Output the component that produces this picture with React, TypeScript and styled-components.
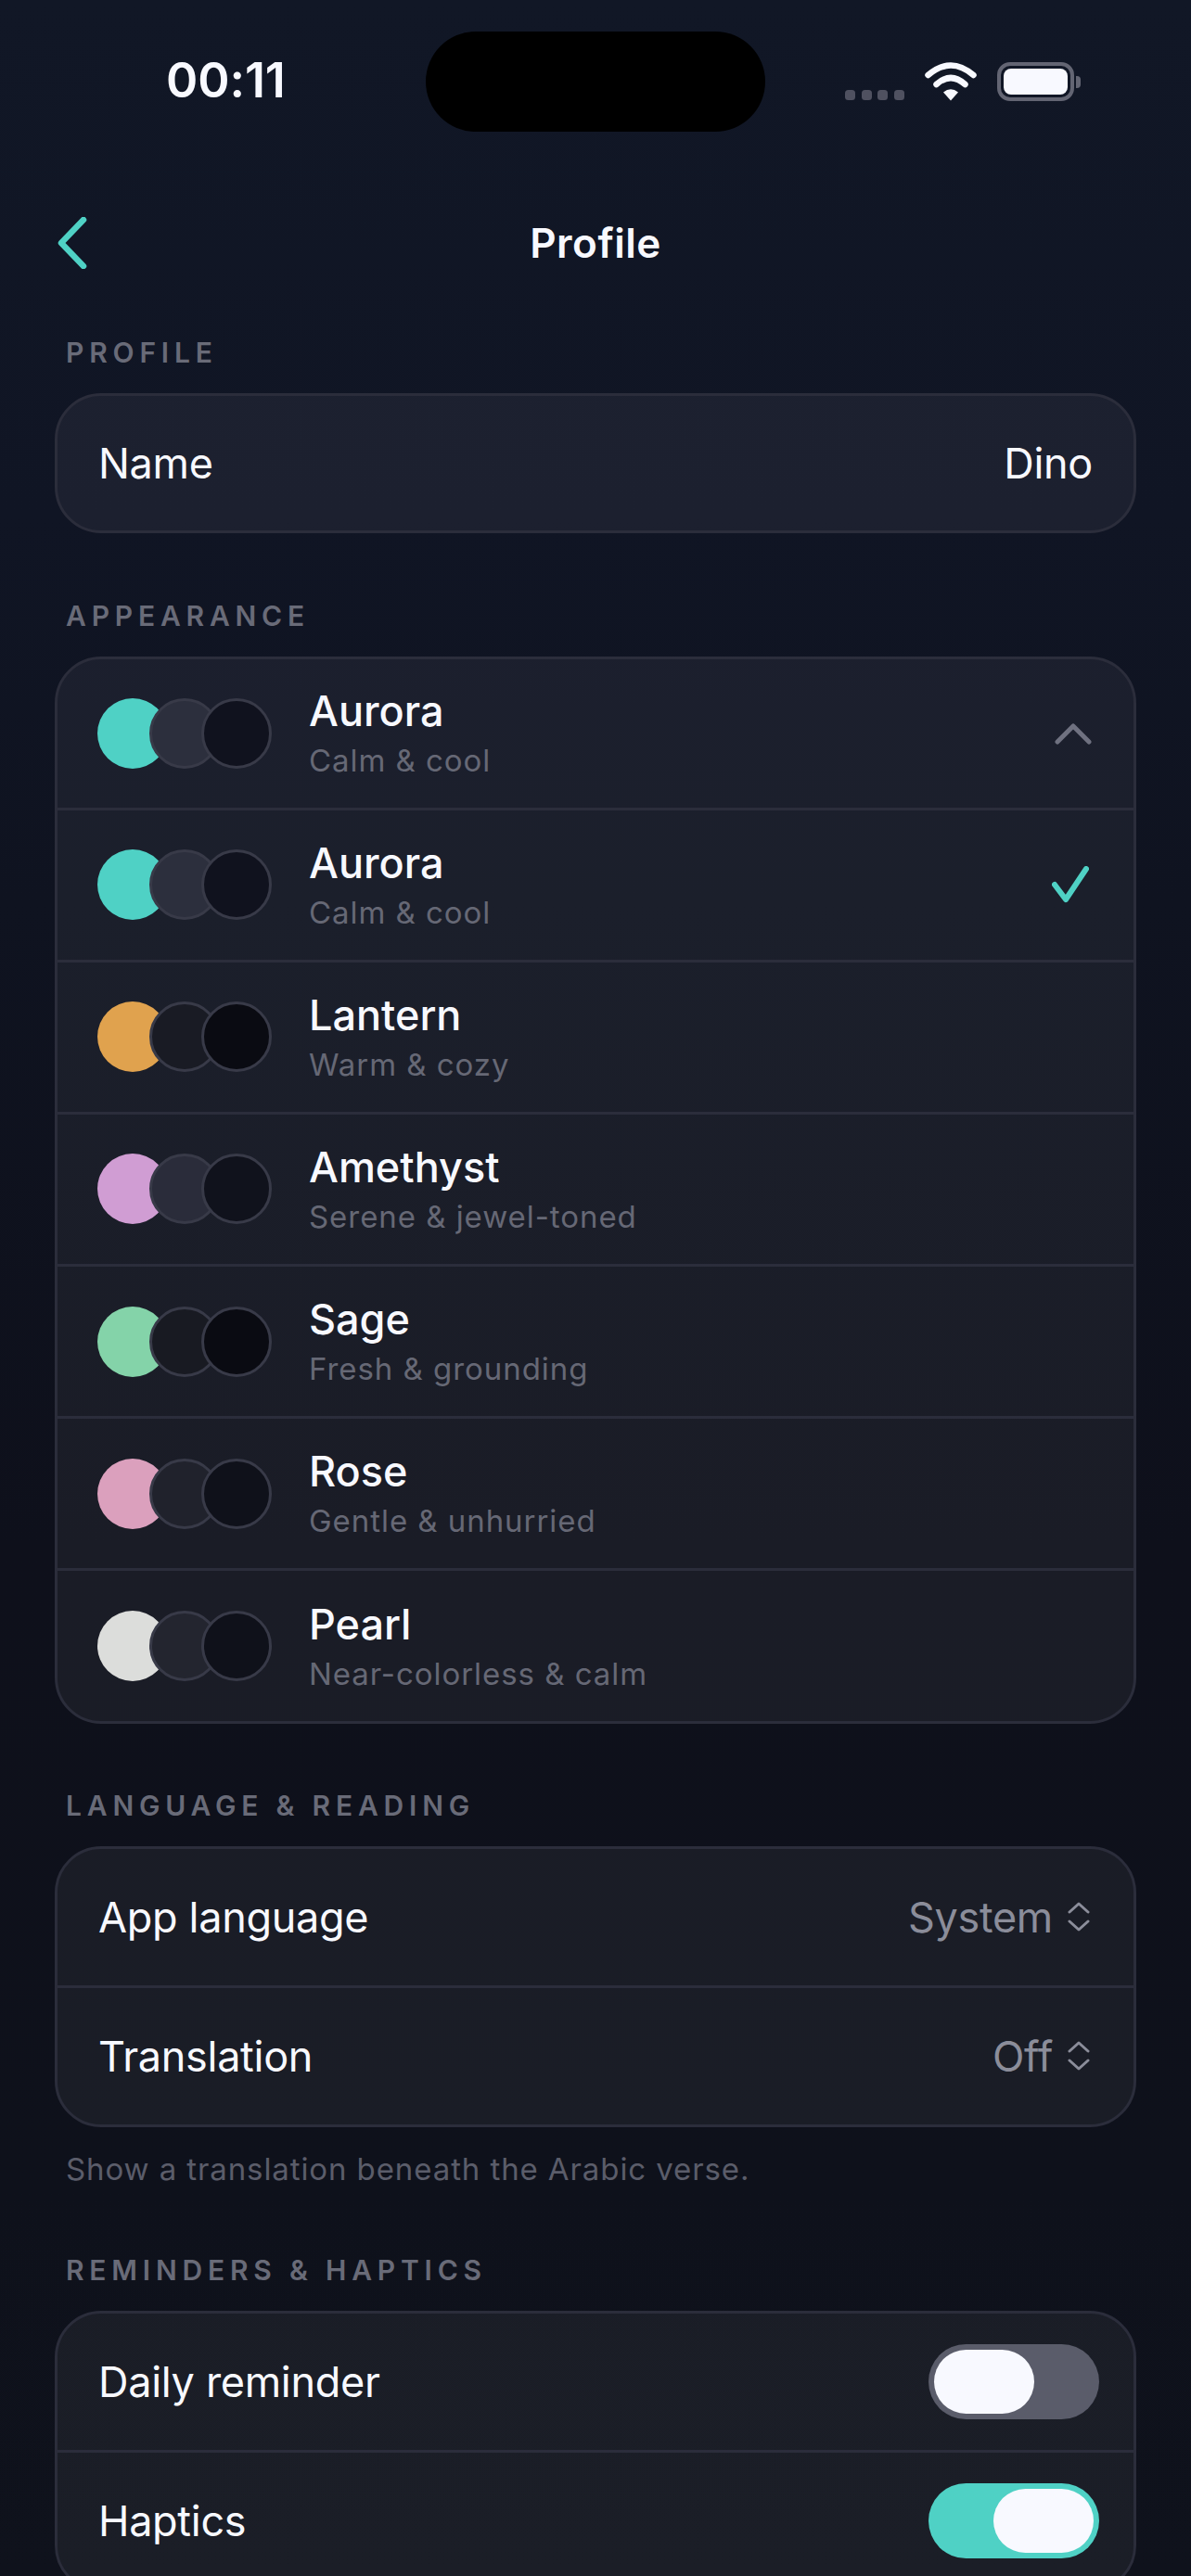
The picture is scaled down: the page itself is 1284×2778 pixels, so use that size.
import React from 'react';
import styled, { createGlobalStyle } from 'styled-components';

const teal = '#4fd1c5';

const GlobalStyle = createGlobalStyle`
    html, body {
        margin: 0;
        padding: 0;
        background: #0e101b;
    }
    * {
        box-sizing: border-box;
    }
`;

const Page = styled.div`
    width: 1284px;
    height: 2778px;
    overflow: hidden;
    padding: 34px 59px 0;
    font-family: Inter, "Noto Sans", sans-serif;
    color: #f8f9ff;
    background: linear-gradient(180deg, #111726 0%, #101524 20%, #0f1320 35%, #0e101b 60%, #0e111b 85%, #0f121c 100%);
`;

const StatusBar = styled.div`
    position: relative;
    height: 108px;
    margin: 0 -59px;
    display: flex;
    align-items: center;
    justify-content: center;
`;

const Island = styled.div`
    width: 366px;
    height: 108px;
    border-radius: 54px;
    background: #000;
`;

const Time = styled.div`
    position: absolute;
    left: 179px;
    top: 23px;
    font-size: 52px;
    line-height: 60px;
    font-weight: 600;
    letter-spacing: -0.1px;
`;

const StatusIcons = styled.div`
    position: absolute;
    left: 911px;
    top: 33px;
    display: flex;
    align-items: flex-end;
`;

const SignalDots = styled.div`
    display: flex;
    gap: 6.5px;
    margin-right: 22px;
    margin-bottom: 1px;
`;

const SignalDot = styled.span`
    width: 11px;
    height: 11px;
    border-radius: 3.5px;
    background: #4f5160;
`;

const Battery = styled.div`
    position: relative;
    width: 83px;
    height: 42px;
    margin-left: 22px;
    padding: 3px;
    border: 4px solid #636573;
    border-radius: 14px;
    &::after {
        content: '';
        position: absolute;
        left: 81px;
        top: 11px;
        width: 5px;
        height: 13px;
        border-radius: 0 4px 4px 0;
        background: #636573;
    }
`;

const BatteryFill = styled.div`
    height: 100%;
    border-radius: 8px;
    background: #f8f9ff;
`;

const Nav = styled.div`
    position: relative;
    margin-top: 76px;
    height: 88px;
    display: flex;
    align-items: center;
    justify-content: center;
`;

const BackButton = styled.svg`
    position: absolute;
    left: 2px;
    top: 16px;
`;

const NavTitle = styled.div`
    font-size: 44px;
    font-weight: 600;
    letter-spacing: 0.5px;
`;

const SectionLabel = styled.div<{ $top: number }>`
    margin-top: ${(p) => p.$top}px;
    margin-left: 12px;
    height: 36px;
    font-size: 30px;
    line-height: 36px;
    font-weight: 600;
    letter-spacing: 5.8px;
    color: #696b78;
    white-space: nowrap;
`;

const Card = styled.div`
    margin-top: 26px;
    width: 1166px;
    border: 3px solid #2b2d3b;
    border-radius: 50px;
    overflow: hidden;
    background: rgba(255, 255, 255, 0.05);
`;

const Row = styled.div<{ $height?: number }>`
    height: ${(p) => p.$height ?? 147}px;
    padding: 0 44px;
    display: flex;
    align-items: center;
    justify-content: space-between;
    & + & {
        height: 150px;
        border-top: 3px solid #2b2d3b;
    }
`;

const RowLabel = styled.div`
    font-size: 45px;
    font-weight: 400;
    letter-spacing: -0.3px;
`;

const RowValue = styled.div<{ $muted?: boolean }>`
    display: flex;
    align-items: center;
    gap: 16px;
    font-size: 45px;
    letter-spacing: -0.3px;
    color: ${(p) => (p.$muted ? '#8b8d9a' : '#f8f9ff')};
`;

const UpDownIcon = styled.svg`
    margin-right: 3px;
`;

const ThemeRow = styled.div`
    height: 159.5px;
    padding: 0 43px;
    display: flex;
    align-items: center;
    & + & {
        height: 164.2px;
        border-top: 3px solid #2b2d3b;
    }
`;

const Swatches = styled.div`
    display: flex;
    width: 228px;
    flex-shrink: 0;
`;

const Swatch = styled.span<{ $color: string; $plain?: boolean }>`
    width: 76px;
    height: 76px;
    border-radius: 50%;
    margin-right: -20px;
    background: ${(p) => p.$color};
    border: ${(p) => (p.$plain ? 'none' : '3px solid #383a48')};
`;

const ThemeText = styled.div`
    flex: 1;
`;

const ThemeName = styled.div`
    font-size: 45px;
    line-height: 54px;
    font-weight: 500;
`;

const ThemeNote = styled.div`
    margin-top: 5px;
    font-size: 33px;
    line-height: 42px;
    color: #666875;
    letter-spacing: 0.95px;
`;

const ThemeIcon = styled.svg<{ $right: number }>`
    margin-right: ${(p) => p.$right}px;
`;

const Note = styled.div`
    margin: 24px 0 0 12px;
    font-size: 33px;
    line-height: 42px;
    color: #5b5d6a;
    letter-spacing: 0.9px;
    white-space: nowrap;
`;

const ToggleTrack = styled.div<{ $on?: boolean }>`
    width: 184px;
    height: 81px;
    margin-right: -7px;
    padding: 6px;
    border-radius: 41px;
    display: flex;
    justify-content: ${(p) => (p.$on ? 'flex-end' : 'flex-start')};
    background: ${(p) => (p.$on ? teal : '#5a5c6a')};
`;

const ToggleKnob = styled.div`
    width: 108px;
    height: 69px;
    border-radius: 35px;
    background: #f8f9ff;
`;

const themes = [
    { name: 'Aurora', note: 'Calm & cool', color: teal, mid: '#2c2f3d', dark: '#10121e' },
    { name: 'Lantern', note: 'Warm & cozy', color: '#e0a24e', mid: '#191b24', dark: '#0a0b12' },
    { name: 'Amethyst', note: 'Serene & jewel-toned', color: '#d09dd3', mid: '#2a2c3a', dark: '#10121c' },
    { name: 'Sage', note: 'Fresh & grounding', color: '#84d3a9', mid: '#181a22', dark: '#0a0b12' },
    { name: 'Rose', note: 'Gentle & unhurried', color: '#dba0bd', mid: '#20222c', dark: '#0f111a' },
    { name: 'Pearl', note: 'Near-colorless & calm', color: '#dcdddb', mid: '#23252f', dark: '#0f111a' },
];

const UpDown: React.FC = () => (
    <UpDownIcon width="24" height="34" viewBox="0 0 24 34" fill="none" stroke="#8b8d9a" strokeWidth="3" strokeLinecap="round" strokeLinejoin="round">
        <path d="M2 12 L12 3 L22 12" />
        <path d="M2 22 L12 31 L22 22" />
    </UpDownIcon>
);

const ThemeSwatches: React.FC<{ color: string; mid: string; dark: string }> = ({ color, mid, dark }) => (
    <Swatches>
        <Swatch $color={color} $plain />
        <Swatch $color={mid} />
        <Swatch $color={dark} />
    </Swatches>
);

const App: React.FC = () => {
    return (<React.Fragment>
        <GlobalStyle />
        <Page>
            <StatusBar>
                <Time>00:11</Time>
                <Island />
                <StatusIcons>
                    <SignalDots>
                        <SignalDot /><SignalDot /><SignalDot /><SignalDot />
                    </SignalDots>
                    <svg width="56" height="42" viewBox="0 0 56 42" fill="none" stroke="#f8f9ff" strokeWidth="6.5" strokeLinecap="round">
                        <path d="M3.5 14 Q28 -7 52.500 14" />
                        <path d="M12.500 24 Q28 10 43.500 24" />
                        <path d="M20 32.500 Q28 26 36 32.500 L28 41.500 Z" fill="#f8f9ff" stroke="none" />
                    </svg>
                    <Battery><BatteryFill /></Battery>
                </StatusIcons>
            </StatusBar>

            <Nav>
                <BackButton width="34" height="56" viewBox="0 0 34 56" fill="none" stroke={teal} strokeWidth="6.5" strokeLinecap="round" strokeLinejoin="round">
                    <path d="M29 3 L5 28 L29 53" />
                </BackButton>
                <NavTitle>Profile</NavTitle>
            </Nav>

            <SectionLabel $top={56}>PROFILE</SectionLabel>
            <Card>
                <Row $height={145}>
                    <RowLabel>Name</RowLabel>
                    <RowValue>Dino</RowValue>
                </Row>
            </Card>

            <SectionLabel $top={71}>APPEARANCE</SectionLabel>
            <Card>
                <ThemeRow>
                    <ThemeSwatches color={teal} mid="#2c2f3d" dark="#10121e" />
                    <ThemeText>
                        <ThemeName>Aurora</ThemeName>
                        <ThemeNote>Calm &amp; cool</ThemeNote>
                    </ThemeText>
                    <ThemeIcon $right={2} width="40" height="24" viewBox="0 0 40 24" fill="none" stroke="#6f7180" strokeWidth="5" strokeLinecap="round" strokeLinejoin="round">
                        <path d="M3 21 L20 4 L37 21" />
                    </ThemeIcon>
                </ThemeRow>
                {themes.map((theme, index) => (
                    <ThemeRow key={theme.name}>
                        <ThemeSwatches color={theme.color} mid={theme.mid} dark={theme.dark} />
                        <ThemeText>
                            <ThemeName>{theme.name}</ThemeName>
                            <ThemeNote>{theme.note}</ThemeNote>
                        </ThemeText>
                        {index === 0 && (
                            <ThemeIcon $right={5} width="40" height="40" viewBox="0 0 40 40" fill="none" stroke={teal} strokeWidth="6" strokeLinecap="round" strokeLinejoin="round">
                                <path d="M3 20 L15 36 L37 3" />
                            </ThemeIcon>
                        )}
                    </ThemeRow>
                ))}
            </Card>

            <SectionLabel $top={70}>LANGUAGE &amp; READING</SectionLabel>
            <Card>
                <Row>
                    <RowLabel>App language</RowLabel>
                    <RowValue $muted>System <UpDown /></RowValue>
                </Row>
                <Row>
                    <RowLabel>Translation</RowLabel>
                    <RowValue $muted>Off <UpDown /></RowValue>
                </Row>
            </Card>
            <Note>Show a translation beneath the Arabic verse.</Note>

            <SectionLabel $top={70}>REMINDERS &amp; HAPTICS</SectionLabel>
            <Card>
                <Row>
                    <RowLabel>Daily reminder</RowLabel>
                    <ToggleTrack><ToggleKnob /></ToggleTrack>
                </Row>
                <Row>
                    <RowLabel>Haptics</RowLabel>
                    <ToggleTrack $on><ToggleKnob /></ToggleTrack>
                </Row>
            </Card>
        </Page>
    </React.Fragment>);
};

export default App;
